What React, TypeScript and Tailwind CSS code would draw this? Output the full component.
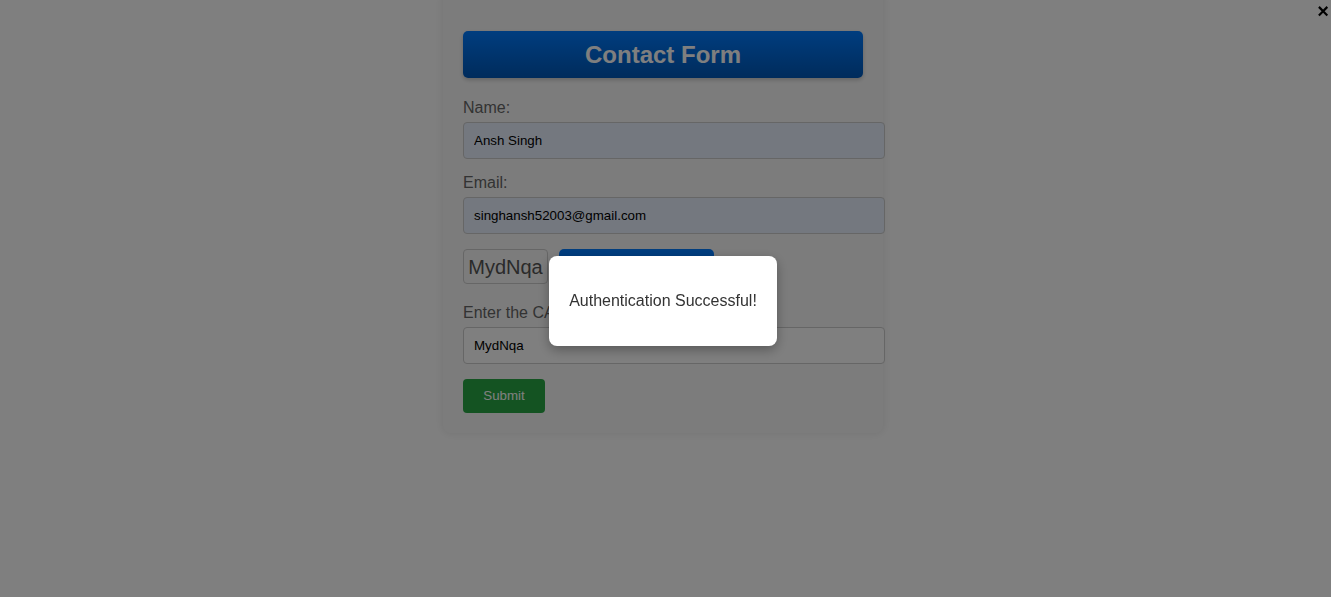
import React from "react";

export default function App() {
  const font = { fontFamily: '"Liberation Sans", Arial, sans-serif' };
  return (
    <div className="relative min-h-screen w-full bg-white overflow-hidden" style={font}>
      <div className="flex justify-center pr-[5px]">
        <div className="mt-[-9px] w-[440px] bg-[#f9f9f9] px-5 pt-5 pb-5 rounded-[8px] shadow-[0_0_10px_rgba(0,0,0,0.1)]">
          <div className="mt-5 mb-[21px] flex h-[47px] items-center justify-center rounded-[5px] bg-linear-to-b from-[#007bff] to-[#0058b8] text-[24px] font-bold text-white shadow-[0_2px_4px_rgba(0,0,0,0.2)]">
            Contact Form
          </div>

          <div className="mb-[15px]">
            <label className="mb-[5px] block text-[16px] leading-[18px] text-[#666]">Name:</label>
            <input
              readOnly
              value="Ansh Singh"
              className="block h-[37px] w-[422px] rounded-[4px] border border-[#ccc] bg-[#e8f0fe] px-[10px] text-[13.33px] text-black outline-none"
            />
          </div>

          <div className="mb-[15px]">
            <label className="mb-[5px] block text-[16px] leading-[18px] text-[#666]">Email:</label>
            <input
              readOnly
              value="singhansh52003@gmail.com"
              className="block h-[37px] w-[422px] rounded-[4px] border border-[#ccc] bg-[#e8f0fe] px-[10px] text-[13.33px] text-black outline-none"
            />
          </div>

          <div className="mb-[20px] flex h-[35px] items-stretch gap-[11px]">
            <span className="flex w-[85px] items-center justify-center rounded-[4px] border border-[#ccc] text-[20px] text-[#555]">
              MydNqa
            </span>
            <button className="h-[34px] w-[155px] rounded-[5px] bg-[#007bff] text-[13.33px] text-white">
              Refresh CAPTCHA
            </button>
          </div>

          <div className="mb-[15px]">
            <label className="mb-[5px] block text-[16px] leading-[18px] text-[#666]">Enter the CAPTCHA:</label>
            <input
              readOnly
              value="MydNqa"
              className="block h-[37px] w-[422px] rounded-[4px] border border-[#ccc] bg-white px-[10px] text-[13.33px] text-black outline-none"
            />
          </div>

          <button className="h-[34px] w-[82px] rounded-[4px] bg-[#28a745] text-[13.33px] text-white">
            Submit
          </button>
        </div>
      </div>

      <div className="fixed inset-0 bg-black/50">
        <button className="absolute right-[2px] top-[-1px] text-[20px] font-bold leading-[24px] text-black">
          ×
        </button>
        <div className="absolute left-[549px] top-[256px] flex h-[90px] w-[228px] items-center justify-center rounded-[8px] bg-white px-5 text-[16px] text-[#333] shadow-[0_4px_12px_rgba(0,0,0,0.3)]">
          Authentication Successful!
        </div>
      </div>
    </div>
  );
}
